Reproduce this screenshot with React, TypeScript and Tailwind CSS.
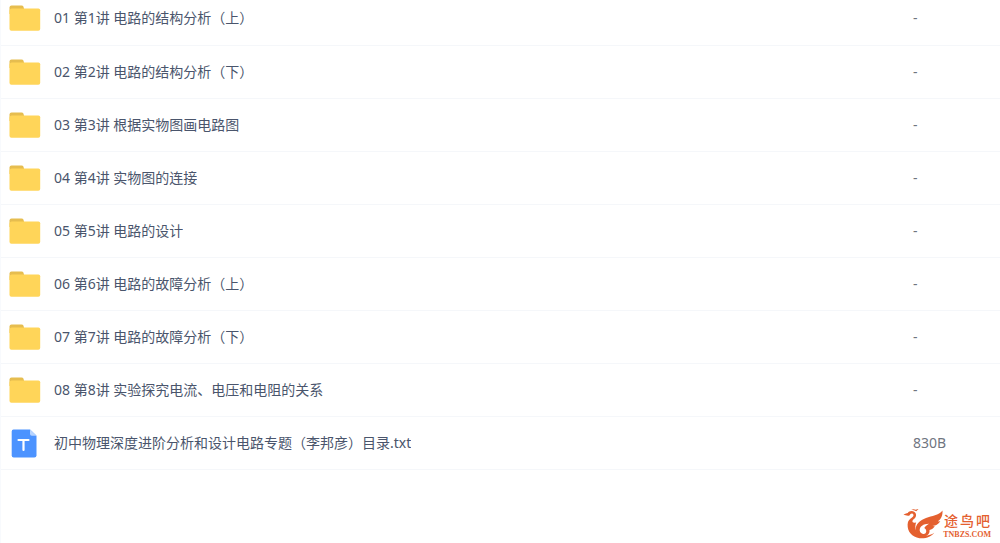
type Entry = { name: string; size: string; kind: 'folder' | 'text' };

const entries: Entry[] = [
  { name: '01 第1讲 电路的结构分析（上）', size: '-', kind: 'folder' },
  { name: '02 第2讲 电路的结构分析（下）', size: '-', kind: 'folder' },
  { name: '03 第3讲 根据实物图画电路图', size: '-', kind: 'folder' },
  { name: '04 第4讲 实物图的连接', size: '-', kind: 'folder' },
  { name: '05 第5讲 电路的设计', size: '-', kind: 'folder' },
  { name: '06 第6讲 电路的故障分析（上）', size: '-', kind: 'folder' },
  { name: '07 第7讲 电路的故障分析（下）', size: '-', kind: 'folder' },
  { name: '08 第8讲 实验探究电流、电压和电阻的关系', size: '-', kind: 'folder' },
  { name: '初中物理深度进阶分析和设计电路专题（李邦彦）目录.txt', size: '830B', kind: 'text' },
];

function FolderIcon() {
  return (
    <svg viewBox="0 0 32 32" className="size-8" aria-hidden="true">
      <path d="M.5 5.500Q.5 3.500 2.500 3.500H12.500Q14 3.500 14.500 4.700L15.500 8.500V12H.5Z" fill="#e6bd4f" />
      <path d="M.5 9Q.5 6.500 3 6.500H29.500Q31.200 6.500 31.200 8.300V26.800Q31.200 28.700 29.300 28.700H2.400Q.5 28.700 .5 26.800Z" fill="#ffd559" />
    </svg>
  );
}

function TextFileIcon() {
  return (
    <svg viewBox="0 0 32 32" className="size-8" aria-hidden="true">
      <path d="M4.500 2.500H21L27.500 8.700V28.300Q27.500 30.500 25.300 30.500H4.700Q2.700 30.500 2.700 28.300V4.500Q2.700 2.500 4.500 2.500Z" fill="#4c93ff" />
      <path d="M21 2.500 27.500 8.700H22.800Q21 8.700 21 6.900Z" fill="#b7d4ff" />
      <path d="M9.500 13H19.500M14.500 13V23" stroke="#fff" strokeWidth="2.200" strokeLinecap="round" fill="none" />
    </svg>
  );
}

function BirdLogo() {
  return (
    <svg viewBox="0 0 40 30" className="h-[30px] w-10" fill="#e4602f" aria-hidden="true">
      <path d="M.5 5.500C2.500 4.600 3.600 4.200 4.800 4C6 1.900 9.300 1.400 11.500 3C13.800 4.800 13.500 8 11.300 9.800C9.800 11 9.300 11.800 9.500 13C10.500 14 11.800 14 13.200 13.200C11 19 13 25.500 20 26.700C25 27 28.700 25.700 31.200 23.800C28.500 27.700 22.500 30 16.500 29.200C9 28.200 4.300 22.500 4.600 15.500C4.700 11.700 6.700 10 9 8.400C10.800 7.200 11 5.500 9.700 4.700C8.300 3.900 7.300 5.100 6.500 6.500C4.500 7.100 2.300 6.300 .5 5.500Z" />
      <path fillRule="evenodd" d="M12.700 21C12.300 15 17 11.500 23 9C29 6.700 35.500 6.500 39.500 1.500C39.800 6.300 38.200 10.500 34.800 12.300C35.800 12.500 36.600 12.400 37.300 12C35.300 15.700 32.500 16.700 29.500 16.700C30.200 17.200 31 17.300 32 17C30.500 19.500 28.700 20.600 26.500 20.900C27 24.500 24.500 27.300 20.500 27.500C16 27.500 13 24.800 12.700 21ZM16.700 21.500C16.500 17.500 20.500 14.700 26 14.800C23.800 16.100 22.300 17.300 21.300 18.900C22.700 19.600 23.500 21 23.200 22.800C22.800 24.500 21.500 25.300 20.200 25C18.300 24.600 16.900 23.300 16.700 21.500Z" />
      <path d="M8.300.9C10 .1 11.500.2 12.700.8C13.700 0 14.800.1 15.500.6C14.500 1 13.900 1.600 13.300 2.300C11.800 1.300 10.200.9 8.300.9Z" />
    </svg>
  );
}

export default function App() {
  return (
    <main className="flex min-h-screen flex-col overflow-hidden border-l border-[#f8fafd] bg-white font-['Noto_Sans','Noto_Sans_CJK_SC',sans-serif] text-sm text-[#4a556c]">
      <table aria-label="文件列表" className="-mt-2 w-full table-fixed border-collapse">
        <colgroup>
          <col />
          <col className="w-[87px]" />
        </colgroup>
        <tbody>
          {entries.map((entry) => (
            <tr key={entry.name} className="h-[53px] border-b border-[#f5f7fa]">
              <td className="p-0 pl-2">
                <a href="#" className="flex items-center gap-[13px]">
                  {entry.kind === 'folder' ? <FolderIcon /> : <TextFileIcon />}
                  <span className="truncate leading-5">{entry.name}</span>
                </a>
              </td>
              <td className="p-0 leading-5 text-[#70757f]">{entry.size}</td>
            </tr>
          ))}
        </tbody>
      </table>
      <footer className="mt-auto flex justify-end pr-[9px] pb-1">
        <a href="#" className="flex items-end text-[#e4602f]">
          <BirdLogo />
          <span className="flex flex-col items-center">
            <span className="flex gap-[2px] text-sm leading-5 font-medium">
              <span>途</span>
              <span>鸟</span>
              <span>吧</span>
            </span>
            <span className="font-['Liberation_Serif',serif] text-[8px] leading-2 font-bold">TNBZS.COM</span>
          </span>
        </a>
      </footer>
    </main>
  );
}
